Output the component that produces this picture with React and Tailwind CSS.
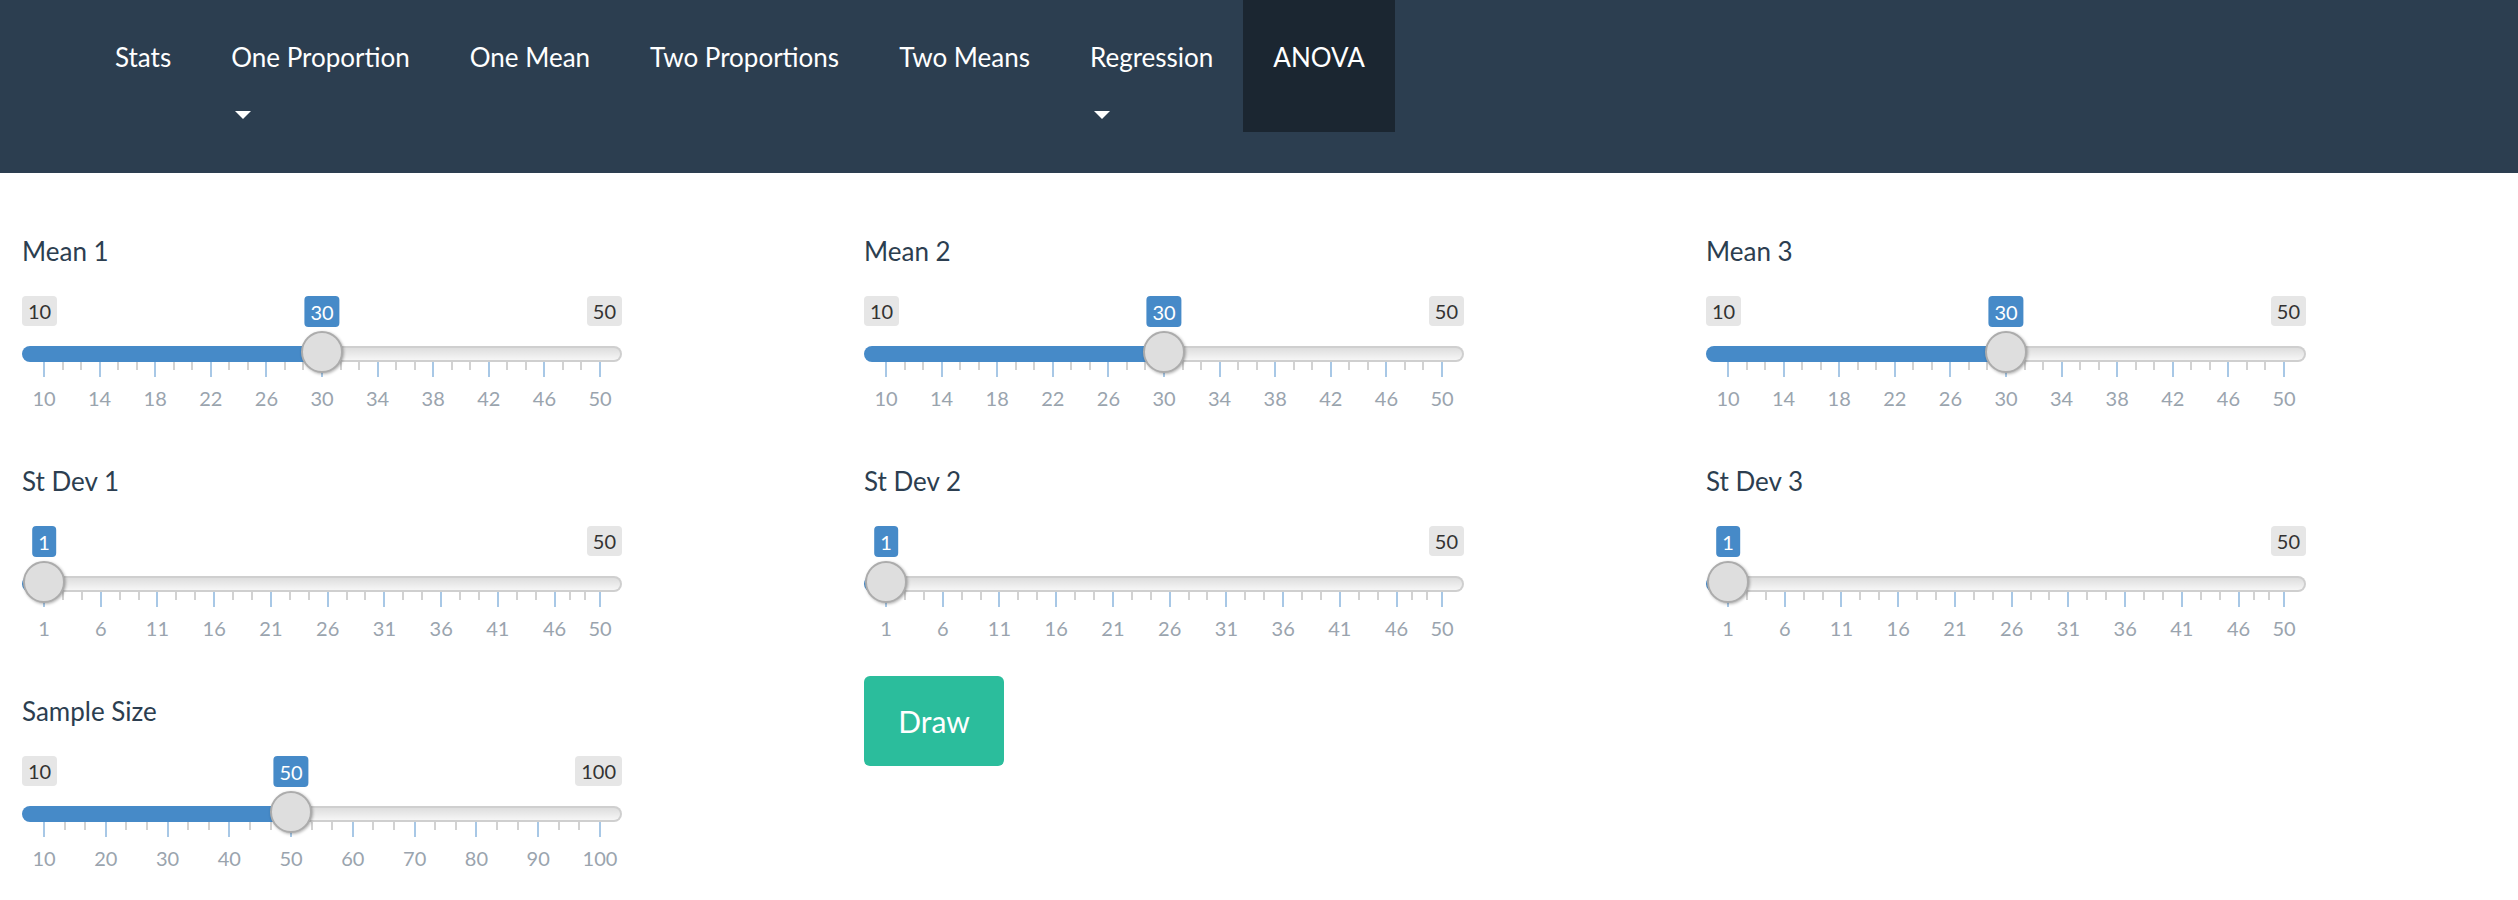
const navItems = [
  { name: 'Stats' },
  { name: 'One Proportion', dropdown: true },
  { name: 'One Mean' },
  { name: 'Two Proportions' },
  { name: 'Two Means' },
  { name: 'Regression', dropdown: true },
  { name: 'ANOVA', active: true },
]

const columns = [
  [
    { label: 'Mean 1', min: 10, max: 50, value: 30, interval: 4 },
    { label: 'St Dev 1', min: 1, max: 50, value: 1, interval: 5 },
    { label: 'Sample Size', min: 10, max: 100, value: 50, interval: 10 },
  ],
  [
    { label: 'Mean 2', min: 10, max: 50, value: 30, interval: 4 },
    { label: 'St Dev 2', min: 1, max: 50, value: 1, interval: 5 },
  ],
  [
    { label: 'Mean 3', min: 10, max: 50, value: 30, interval: 4 },
    { label: 'St Dev 3', min: 1, max: 50, value: 1, interval: 5 },
  ],
]

// same tick layout as ion.rangeSlider's grid
function grid(min, max, interval) {
  const total = (max - min) / interval
  const bigW = 100 / total
  let smallMax = 4
  if (total > 4) smallMax = 3
  if (total > 7) smallMax = 2
  if (total > 14) smallMax = 1
  if (total > 28) smallMax = 0
  const big = []
  const small = []
  for (let i = 0; i < total + 1; i++) {
    let p = bigW * i
    if (p > 100) p = 100
    big.push({ p, v: Math.round(min + ((max - min) * p) / 100) })
    const smallW = (p - bigW * (i - 1)) / (smallMax + 1)
    if (p !== 0) for (let z = 1; z <= smallMax; z++) small.push(p - smallW * z)
  }
  return { big, small }
}

const PAD = 22
const TRAVEL = 556
const px = (p) => PAD + (p / 100) * TRAVEL

function Slider({ label, min, max, value, interval }) {
  const { big, small } = grid(min, max, interval)
  const pos = px(((value - min) / (max - min)) * 100)
  const hideMin = pos < 70
  return (
    <div className="h-[230px] pt-[16px]">
      <div className="text-[26px] leading-[30px] text-[#2c3e50]">{label}</div>
      <div className="relative w-[600px] mt-[30px]">
        <div className="flex justify-between">
          <span className={`h-[30px] px-[6px] flex items-center rounded-[4px] bg-[#e6e6e6] text-[20px] text-[#333] ${hideMin ? 'invisible' : ''}`}>{min}</span>
          <span className="h-[30px] px-[6px] flex items-center rounded-[4px] bg-[#e6e6e6] text-[20px] text-[#333]">{max}</span>
        </div>
        <div className="mt-[20px] flex h-[16px]">
          <div className="rounded-l-full bg-[#468ac8]" style={{ width: pos }} />
          <div className="flex-1 rounded-r-full border-2 border-l-0 border-[#cfcfcf] bg-gradient-to-b from-[#dedede] to-[#f6f6f6]" />
        </div>
        <div className="relative h-[50px]">
          {small.map((p, i) => (
            <span key={'s' + i} className="absolute top-0 w-[2px] h-[8px] bg-[#d2d2d2]" style={{ left: px(p) - 1 }} />
          ))}
          {big.map((t, i) => (
            <span key={'b' + i}>
              <span className="absolute top-0 w-[2px] h-[15px] bg-[#a8c8e6]" style={{ left: px(t.p) - 1 }} />
              <span className="absolute top-[24px] -translate-x-1/2 text-[20px] leading-[24px] text-[#9aa4ae]" style={{ left: px(t.p) }}>
                {t.v}
              </span>
            </span>
          ))}
        </div>
        <span
          className="absolute top-0 -translate-x-1/2 h-[31px] px-[6px] flex items-center rounded-[4px] bg-[#468ac8] text-[20px] text-white"
          style={{ left: pos }}
        >
          {value}
        </span>
        <span
          className="absolute top-[35px] w-[42px] h-[42px] rounded-full border-2 border-[#acacac] bg-[#dedede] shadow-[1px_1px_3px_rgba(0,0,0,0.3)]"
          style={{ left: pos - 21 }}
        />
      </div>
    </div>
  )
}

export default function App() {
  return (
    <div className="min-h-screen bg-white" style={{ fontFamily: 'Lato, "Open Sans", sans-serif' }}>
      <nav className="h-[173px] bg-[#2c3e50] pl-[85px] flex items-start">
        {navItems.map((n) => (
          <a
            key={n.name}
            className={`shrink-0 px-[30px] pt-[30px] text-[26px] leading-[55px] text-white ${n.active ? 'h-[132px] bg-[#1b2631]' : ''}`}
          >
            {n.name}
            {n.dropdown && (
              <span className="block">
                <span className="inline-block align-middle ml-[4px] border-x-[8px] border-x-transparent border-t-[8px] border-t-white" />
              </span>
            )}
          </a>
        ))}
      </nav>
      <main className="pl-[22px] pt-[47px] flex">
        {columns.map((col, ci) => (
          <div key={ci} className="w-[842px] shrink-0">
            {col.map((s) => (
              <Slider key={s.label} {...s} />
            ))}
            {ci === 1 && (
              <button className="-mt-1 w-[140px] h-[90px] rounded-[6px] bg-[#2bbd9c] text-white text-[30px]">Draw</button>
            )}
          </div>
        ))}
      </main>
    </div>
  )
}
